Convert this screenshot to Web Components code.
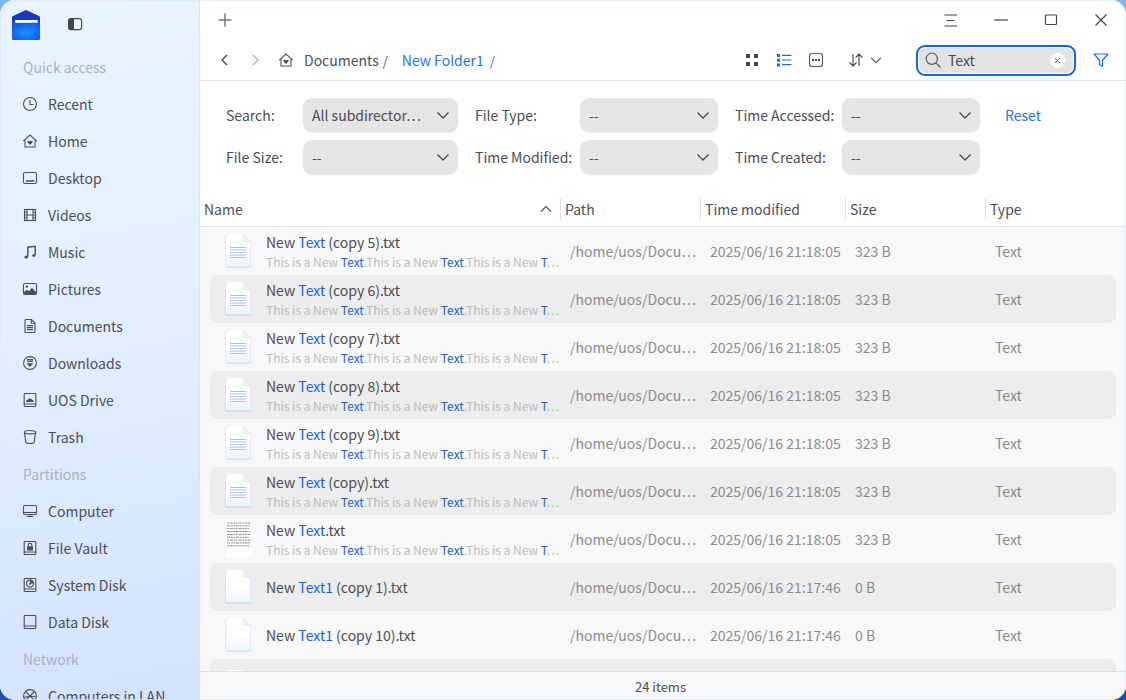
<!DOCTYPE html>
<html lang="en"><head><meta charset="utf-8"><title>File Manager</title>
<style>
html,body{margin:0;height:100%;overflow:hidden}
body{background:linear-gradient(180deg,#7fb6ee 0,#7fb6ee 50%,#1c4cb4 50%,#1c4cb4 100%);font:14px "Noto Sans CJK SC","Noto Sans",sans-serif;color:#4a4d52}
</style></head><body>
<fm-window>
  <fm-sidebar slot="side">
    <fm-section>Quick access</fm-section>
    <fm-nav icon="clock">Recent</fm-nav>
    <fm-nav icon="home">Home</fm-nav>
    <fm-nav icon="desktop">Desktop</fm-nav>
    <fm-nav icon="videos">Videos</fm-nav>
    <fm-nav icon="music">Music</fm-nav>
    <fm-nav icon="pictures">Pictures</fm-nav>
    <fm-nav icon="doc">Documents</fm-nav>
    <fm-nav icon="down">Downloads</fm-nav>
    <fm-nav icon="drive">UOS Drive</fm-nav>
    <fm-nav icon="trash">Trash</fm-nav>
    <fm-section>Partitions</fm-section>
    <fm-nav icon="computer">Computer</fm-nav>
    <fm-nav icon="vault">File Vault</fm-nav>
    <fm-nav icon="sysdisk">System Disk</fm-nav>
    <fm-nav icon="disk">Data Disk</fm-nav>
    <fm-section>Network</fm-section>
    <fm-nav icon="lan">Computers in LAN</fm-nav>
  </fm-sidebar>
  <fm-titlebar slot="main"></fm-titlebar>
  <fm-toolbar slot="main"></fm-toolbar>
  <fm-filters slot="main"></fm-filters>
  <fm-header slot="main"></fm-header>
  <fm-list slot="main">
    <fm-row pre="New " hit="Text" post=" (copy 5).txt" icon="lines" time="2025/06/16 21:18:05" size="323 B" sub></fm-row>
    <fm-row alt pre="New " hit="Text" post=" (copy 6).txt" icon="lines" time="2025/06/16 21:18:05" size="323 B" sub></fm-row>
    <fm-row pre="New " hit="Text" post=" (copy 7).txt" icon="lines" time="2025/06/16 21:18:05" size="323 B" sub></fm-row>
    <fm-row alt pre="New " hit="Text" post=" (copy 8).txt" icon="lines" time="2025/06/16 21:18:05" size="323 B" sub></fm-row>
    <fm-row pre="New " hit="Text" post=" (copy 9).txt" icon="lines" time="2025/06/16 21:18:05" size="323 B" sub></fm-row>
    <fm-row alt pre="New " hit="Text" post=" (copy).txt" icon="lines" time="2025/06/16 21:18:05" size="323 B" sub></fm-row>
    <fm-row pre="New " hit="Text" post=".txt" icon="thumb" time="2025/06/16 21:18:05" size="323 B" sub></fm-row>
    <fm-row alt pre="New " hit="Text1" post=" (copy 1).txt" icon="blank" time="2025/06/16 21:17:46" size="0 B"></fm-row>
    <fm-row pre="New " hit="Text1" post=" (copy 10).txt" icon="blank" time="2025/06/16 21:17:46" size="0 B"></fm-row>
    <fm-row alt empty icon="blank"></fm-row>
  </fm-list>
  <fm-status slot="main">24 items</fm-status>
</fm-window>
<script>
const S='fill="none" stroke="currentColor" stroke-width="1.1"';
const ICONS={
clock:`<circle cx="8" cy="8" r="6.5" ${S}/><path d="M8 4v4.5h3.6" ${S}/>`,
home:`<path d="M1.2 8.2 8 2l6.8 6.2M3 7.2V14h10V7.2" ${S}/><path d="M8 12 5.6 9.6c-1-1.2.9-2.7 2.4-1.1 1.5-1.6 3.4-.1 2.4 1.1z" fill="currentColor"/>`,
desktop:`<rect x="1.5" y="2.5" width="13" height="11" rx="1.6" ${S}/><path d="M4 11h8.5" stroke="currentColor" stroke-width="1.6"/>`,
videos:`<rect x="2.5" y="2.5" width="11" height="11" ${S}/><path d="M5 2.5v11M11 2.5v11M2.5 5.2H5M2.5 8H5M2.5 10.8H5M11 5.2h2.5M11 8h2.5M11 10.8h2.5M5 8h6" ${S}/>`,
music:`<path d="M5.8 12.5V3.2l7.4-1V11" fill="none" stroke="currentColor" stroke-width="1.4"/><ellipse cx="4.2" cy="13" rx="1.8" ry="1.5" fill="currentColor"/><ellipse cx="11.8" cy="11.6" rx="1.6" ry="1.3" fill="currentColor"/>`,
pictures:`<rect x="1.5" y="2.5" width="13" height="11" rx="1.4" ${S}/><circle cx="4.8" cy="5.6" r="1.2" fill="currentColor"/><path d="M2 13v-2l3-2.2 2 1.4 3-3.4 4 4.4V13z" fill="currentColor"/>`,
doc:`<path d="M3 2.6c0-.6.4-1.1 1-1.1h5.5L13 5v8.4c0 .6-.4 1.1-1 1.1H4c-.6 0-1-.5-1-1.1z" ${S}/><path d="M9.3 1.7V5.2H13M5 7.6h6M5 9.6h6M5 11.6h6" ${S}/>`,
down:`<circle cx="8" cy="8" r="6.4" ${S}/><path d="M5 4.6h6M5 6.4h6" ${S}/><path d="M4.6 8.2h6.8L8 12z" fill="currentColor"/>`,
drive:`<path d="M3 1.5h10a.8.8 0 0 1 .8.8v11.4a.8.8 0 0 1-.8.8H3a.8.8 0 0 1-.8-.8V2.300a.8.8 0 0 1 .8-.8zM2.200 12h11.600" ${S}/><path d="M4.200 10c-.5-1.500.6-2.400 1.600-2.300.4-1.500 3.500-2 4.200 0 1.200 0 1.900 1.200 1.700 2.300z" fill="currentColor"/>`,
trash:`<path d="M2.200 3.200c0-2.200 11.600-2.200 11.600 0s-11.600 2.200-11.600 0zM2.400 3.400l1.500 10c.2 1.500 8 1.500 8.200 0l1.500-10" ${S}/>`,
computer:`<rect x="1.500" y="2.500" width="13" height="9" rx="1.400" ${S}/><path d="M1.500 9.500h13" ${S}/><path d="M8 11.500v2M4.500 13.500h7" ${S}/>`,
vault:`<path d="M3 1.500h10a.8.8 0 0 1 .8.8v11.400a.8.8 0 0 1-.8.8H3a.8.8 0 0 1-.8-.8V2.300a.8.8 0 0 1 .8-.8zM2.200 12h11.600" ${S}/><rect x="5" y="6.200" width="6" height="4.300" rx=".5" fill="currentColor"/><path d="M6.200 6.500V5c0-2.200 3.600-2.200 3.600 0v1.500" ${S}/>`,
sysdisk:`<path d="M3 1.500h10a.8.8 0 0 1 .8.8v11.400a.8.8 0 0 1-.8.8H3a.8.8 0 0 1-.8-.8V2.300a.8.8 0 0 1 .8-.8zM2.200 12h11.600" ${S}/><circle cx="8" cy="6.600" r="3.500" ${S}/><path d="M8 6.600 8 3.400a3.300 3.300 0 0 1 3.200 3.200z" fill="currentColor"/><circle cx="8" cy="6.900" r="1" fill="currentColor"/>`,
disk:`<path d="M3 1.500h10a.8.8 0 0 1 .8.8v11.400a.8.8 0 0 1-.8.8H3a.8.8 0 0 1-.8-.8V2.300a.8.8 0 0 1 .8-.8zM2.200 12h11.600" ${S}/>`,
lan:`<circle cx="8" cy="8" r="6.400" ${S}/><path d="M3.500 3.500l9 9M12.500 3.500l-9 9M1.800 9.500 8 8l5.800 1" ${S}/>`,
panel:`<rect x=".6" y="1.600" width="13" height="11" rx="2" fill="none" stroke="#44474c" stroke-width="1.200"/><path d="M2.500 1.600H6v11H2.500a2 2 0 0 1-2-2v-7a2 2 0 0 1 2-2z" fill="#44474c"/>`,
plus:`<path d="M8 1.500v13M1.500 8h13" fill="none" stroke="#777" stroke-width="1.500"/>`,
menu:`<path d="M1.500 3h12.500M3.500 8.500h8M1.500 14h12.500" fill="none" stroke="#444" stroke-width="1.100"/>`,
min:`<path d="M1 8h14" fill="none" stroke="#444" stroke-width="1.200"/>`,
max:`<rect x="2.500" y="3" width="11" height="9.500" rx=".8" fill="none" stroke="#444" stroke-width="1.200"/>`,
close:`<path d="M2.500 2.500l11 11M13.500 2.500l-11 11" fill="none" stroke="#444" stroke-width="1.200"/>`,
back:`<path d="M10 3 5 8l5 5" fill="none" stroke="#444" stroke-width="1.300"/>`,
fwd:`<path d="M6 3l5 5-5 5" fill="none" stroke="#b4b4b4" stroke-width="1.300"/>`,
grid:`<path d="M2 2h4v4H2zM10 2h4v4h-4zM2 10h4v4H2zM10 10h4v4h-4z" fill="#444"/>`,
list:`<path d="M1 2h3v3H1zM1 6.700h3v3H1zM1 11.400h3v3H1z" fill="#1f6ce0"/><path d="M6 3.300h9.500M6 8h9.500M6 12.700h9.500" fill="none" stroke="#1f6ce0" stroke-width="1.200"/>`,
more:`<rect x="1.500" y="1.500" width="13" height="13" rx="2.800" fill="none" stroke="#555" stroke-width="1.100"/><path d="M4 7h2v2H4zM7 7h2v2H7zM10 7h2v2h-2z" fill="#444"/>`,
sort:`<path d="M5 2v12M1.500 10.500 5 14l3.500-3.500M11 14V2M7.700 5.500 11 2l3.500 3.500" fill="none" stroke="#444" stroke-width="1.100"/>`,
chev:`<path d="M2.500 5.500 8 11l5.500-5.500" fill="none" stroke="#4c4c4c" stroke-width="1.300"/>`,
up:`<path d="M3 10.500 8 5.500l5 5" fill="none" stroke="#555" stroke-width="1.200"/>`,
search:`<circle cx="6.800" cy="6.800" r="5.600" fill="none" stroke="#59616e" stroke-width="1.200"/><path d="M10.900 10.900 15.500 15.500" fill="none" stroke="#59616e" stroke-width="1.300"/>`,
filter:`<path d="M1.200 2h13.600L9.500 8.500v5.700l-3-1.700V8.500z" fill="none" stroke="#1f6ce0" stroke-width="1.200" stroke-linejoin="round"/>`
};
const svg=(n,w=16,h=w)=>`<svg part="svg" width="${w}" height="${h}" viewBox="0 0 16 16" style="display:block;flex:none" aria-hidden="true">${ICONS[n]}</svg>`;
const PAGE=(lines)=>`<svg width="28" height="34" viewBox="0 0 28 34" style="display:block" aria-hidden="true">
<defs><linearGradient id="g" x1="0" y1="0" x2="0" y2="1"><stop offset="0" stop-color="#fff"/><stop offset=".55" stop-color="#fdfeff"/><stop offset="1" stop-color="#edf3fd"/></linearGradient></defs>
<path d="M1.500 1.500A1.500 1.500 0 0 1 3 0H19l8 8v24a1.500 1.500 0 0 1-1.500 1.500H3A1.500 1.500 0 0 1 1.500 32z" fill="#b9c9e4" opacity=".7"/>
<path d="M2 1.500A1.500 1.500 0 0 1 3.500 0H19l7.500 8v23a1.500 1.500 0 0 1-1.500 1.500H3.500A1.500 1.500 0 0 1 2 31z" fill="url(#g)"/>
<path d="M19 0l8 8h-6.500A1.500 1.500 0 0 1 19 6.500z" fill="#e8eefa"/>
${lines?'<path d="M6 13.500h16.500M6 16h16.500M6 18.500h16.500M6 21h16.500M6 23.500h16.500" stroke="#aebde2" stroke-width="1.100"/>':''}</svg>`;
const THUMB=()=>{let r='';for(let i=0;i<9;i++){const y=2+i*2.85;r+=`<path d="M3 ${y}h${24-(i%3)}" stroke="#666" stroke-width=".8" stroke-dasharray="${2+i%2} .8 ${3-i%2} .8 1.500 .7"/>`}
return `<svg width="28" height="37" viewBox="0 0 28 37" style="display:block" aria-hidden="true"><rect x="2" width="26" height="37" fill="#fff"/>${r}</svg>`};
function def(name,css,html){customElements.define(name,class extends HTMLElement{constructor(){super();this.attachShadow({mode:'open'}).innerHTML=`<style>${css}</style>`+(typeof html==='function'?'':html);}connectedCallback(){if(typeof html==='function'&&!this._r){this._r=1;this.shadowRoot.innerHTML=`<style>${css}</style>`+html(this)}}})}

def('fm-window',`:host{display:grid;grid-template-columns:200px 1fr;width:1126px;height:700px;border-radius:15px;overflow:hidden;position:relative;background:#fff}
.m{display:flex;flex-direction:column;min-width:0;height:700px;background:#fff}
.edge{position:absolute;inset:0;border:1px solid rgba(220,232,250,.75);border-radius:15px;pointer-events:none}`,
`<slot name="side"></slot><div class="m"><slot name="main"></slot></div><div class="edge"></div>`);

def('fm-sidebar',`:host{display:block;height:700px;overflow:hidden;box-sizing:border-box;border-right:1px solid #dbe4f0;background:linear-gradient(170deg,#e9f4fe 0,#e2effe 45%,#d4e3fd 100%)}
.top{display:flex;align-items:center;height:48px;padding-left:12px;box-sizing:border-box}
.t{margin:2px 0 0 28px}`,
`<div class="top"><svg width="28" height="30" viewBox="0 0 28 30" style="margin-top:2px" aria-hidden="true"><defs><radialGradient id="b" cx=".5" cy=".6" r=".7"><stop offset="0" stop-color="#1f93ff"/><stop offset="1" stop-color="#0f50e6"/></radialGradient></defs><path d="M1 6 14 0l13 6a2 2 0 0 1 1 2v20a2 2 0 0 1-2 2H2a2 2 0 0 1-2-2V8a2 2 0 0 1 1-2z" fill="#1238c6"/><path d="M0 12h28v16a2 2 0 0 1-2 2H2a2 2 0 0 1-2-2z" fill="url(#b)"/><path d="M3 10h22.700v2.700H3z" fill="#fff"/></svg><span class="t">${svg('panel',16)}</span></div><slot></slot>`);

def('fm-section',`:host{display:flex;align-items:center;height:37px;padding-left:23px;color:#aab2bc;font-size:14px}`,`<slot></slot>`);

def('fm-nav',`:host{display:flex;align-items:center;height:37px;padding-left:22px;gap:10px;color:#4c4f55;font-size:14px;font-weight:400;white-space:nowrap}`,
h=>`${svg(h.getAttribute('icon'))}<slot></slot>`);

def('fm-titlebar',`:host{display:flex;align-items:center;height:40px;flex:none}
.p{margin-left:17px}.r{margin-left:auto;display:flex;align-items:center;margin-right:17px;gap:34px}`,
`<span class="p">${svg('plus')}</span><div class="r">${svg('menu')}${svg('min')}${svg('max')}${svg('close')}</div>`);

def('fm-toolbar',`:host{display:flex;align-items:center;height:41px;flex:none;box-sizing:border-box;border-bottom:1px solid #e4e4e4;font-size:14px;white-space:nowrap}
.g{display:flex;align-items:center}
.c{margin-left:17px;gap:14px}
.crumb{margin-left:15px;gap:10px;color:#4a4f58}
.blue{color:#2a72e8;margin-left:4px}
.s1{margin-left:-6px;font-size:13px}
.s2{color:#2a72e8;font-size:13px;margin-left:-4px}
.views{margin-left:auto;gap:16px}
.sort{margin-left:24px;gap:5px}
.box{margin-left:33px;margin-right:17px;width:160px;height:31px;box-sizing:border-box;border:2px solid #1a62d4;border-radius:9px;background:#e3e3e3;box-shadow:inset 0 0 0 1px #fff;display:flex;align-items:center;padding-left:7px;gap:7px;color:#4a4d52}
.x{margin-left:auto;margin-right:9px;width:15px;height:15px;border-radius:50%;background:#fff;display:flex;align-items:center;justify-content:center}
.fil{margin-right:17px}`,
`<div class="g c">${svg('back')}${svg('fwd')}</div><div class="g crumb">${svg('home')}<span>Documents</span><span class="s1">/</span><span class="blue">New Folder1</span><span class="s2">/</span></div>
<div class="g views">${svg('grid')}${svg('list')}${svg('more')}</div><div class="g sort">${svg('sort')}${svg('chev',14)}</div>
<div class="box">${svg('search')}<span>Text</span><span class="x"><svg width="7" height="7" viewBox="0 0 7 7" aria-hidden="true"><path d="M1 1l5 5M6 1L1 6" stroke="#667" stroke-width="1"/></svg></span></div><span class="fil">${svg('filter')}</span>`);

def('fm-select',`:host{display:flex;align-items:center;height:34px;box-sizing:border-box;padding:0 7px 0 9px;border-radius:9px;background:#e5e5e5;box-shadow:0 1px 1px rgba(0,0,0,.08);color:#4a4d52;font-size:14px;white-space:nowrap}
.v{flex:1}`,`<span class="v"><slot></slot></span>${svg('chev')}`);

def('fm-filters',`:host{display:grid;flex:none;height:112px;box-sizing:border-box;padding:17px 0 0 26px;grid-template-columns:77px 155px 122px 138px 124px 138px auto;grid-auto-rows:34px;row-gap:8px;align-items:center;font-size:14px;color:#4a4d52;white-space:nowrap}
.i{padding-left:17px}.reset{padding-left:25px;color:#2a72e8}`,
`<span>Search:</span><fm-select>All subdirector…</fm-select><span class="i">File Type:</span><fm-select>--</fm-select><span class="i">Time Accessed:</span><fm-select>--</fm-select><span class="reset">Reset</span>
<span>File Size:</span><fm-select>--</fm-select><span class="i">Time Modified:</span><fm-select>--</fm-select><span class="i">Time Created:</span><fm-select>--</fm-select>`);

def('fm-header',`:host{display:grid;flex:none;height:34px;box-sizing:border-box;border-bottom:1px solid #e4e4e4;grid-template-columns:360px 140px 145px 140px 1fr;align-items:center;font-size:14px;color:#4a4f58;padding-bottom:1px}
div{display:flex;align-items:center;height:22px;padding-left:4px;border-left:1px solid #e2e2e2}
div:first-of-type{border-left:0;justify-content:space-between;padding-right:6px}`,
`<div><span>Name</span>${svg('up')}</div><div>Path</div><div>Time modified</div><div>Size</div><div>Type</div>`);

def('fm-list',`:host{display:block;flex:1;min-height:0;overflow:hidden;background:#f8f8f8}`,`<slot></slot>`);

def('fm-row',`:host{display:grid;height:48px;margin:0 10px;border-radius:8px;grid-template-columns:350px 140px 145px 140px 1fr;align-items:center;color:#8c8c8c;font-size:14px;white-space:nowrap}
:host([alt]){background:#ededed}
.n{display:flex;align-items:center;min-width:0}
.ic{width:56px;padding-left:14px;box-sizing:border-box;flex:none;display:flex}
.tx{min-width:0;flex:1}
.a{color:#4a4d52;line-height:20px}
.b{color:#bcbcbc;font-size:12px;line-height:17px;margin-top:1px}
i{font-style:normal;color:#1a5fe0}
.c{padding-left:10px}`,
h=>{const ic=h.getAttribute('icon');const art=ic==='thumb'?THUMB():PAGE(ic==='lines');
if(h.hasAttribute('empty'))return `<div class="n"><span class="ic" style="align-self:flex-start;margin-top:8px">${art}</span></div>`;
const sub=h.hasAttribute('sub')?`<div class="b">This is a New <i>Text</i>.This is a New <i>Text</i>.This is a New <i>T</i>…</div>`:'';
return `<div class="n"><span class="ic">${art}</span><div class="tx"><div class="a">${h.getAttribute('pre')}<i>${h.getAttribute('hit')}</i>${h.getAttribute('post')}</div>${sub}</div></div>
<div class="c">/home/uos/Docu…</div><div class="c">${h.getAttribute('time')}</div><div class="c">${h.getAttribute('size')}</div><div class="c">Text</div>`});

def('fm-status',`:host{display:flex;align-items:center;justify-content:center;flex:none;height:29px;box-sizing:border-box;border-top:1px solid #e0e0e0;background:#f8f8f8;padding-right:5px;font-size:13px;color:#4a4d52}`,`<slot></slot>`);
</script>
</body></html>
